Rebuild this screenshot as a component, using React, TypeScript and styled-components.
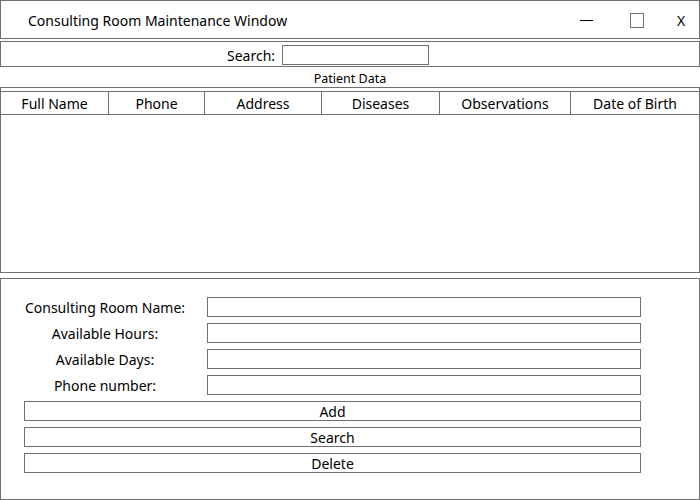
import React from "react";
import styled, { createGlobalStyle } from "styled-components";

const Global = createGlobalStyle`
  html, body { margin: 0; padding: 0; background: #ffffff; }
  * { box-sizing: border-box; }
  body { font-family: "Noto Sans", "Open Sans", sans-serif; color: #000; }
`;

const Window = styled.div`
  width: 700px;
  height: 500px;
  display: flex;
  flex-direction: column;
  background: #fff;
`;

const TitleBar = styled.div`
  height: 39px;
  border: 1px solid #707070;
  display: flex;
  align-items: center;
  padding-left: 27px;
  font-size: 14px;
`;

const Title = styled.span`
  flex: 1;
  line-height: 1;
  padding-top: 3px;
`;

const Control = styled.div<{ $w: number; $mr: number }>`
  width: ${(p) => p.$w}px;
  margin-right: ${(p) => p.$mr}px;
  height: 37px;
  display: flex;
  align-items: center;
  justify-content: center;
  font-size: 14px;
  padding-top: 2px;
`;

const MinLine = styled.div`
  width: 13px;
  height: 1px;
  background: #000;
  margin-top: -1px;
`;

const MaxBox = styled.div`
  width: 14px;
  height: 15px;
  margin-top: 0;
  border: 1px solid #707070;
`;

const SearchBar = styled.div`
  margin-top: 2px;
  height: 26px;
  border: 1px solid #707070;
  display: flex;
  align-items: center;
  padding: 2px 0 0 226px;
  gap: 7px;
  font-size: 14px;
`;

const TextBox = styled.div<{ $w?: number }>`
  height: 20px;
  width: ${(p) => (p.$w ? `${p.$w}px` : "auto")};
  border: 1px solid #707070;
  background: #fff;
`;

const SectionLabel = styled.div`
  height: 20px;
  display: flex;
  align-items: center;
  justify-content: center;
  font-size: 12.5px;
  padding-top: 3px;
`;

const TableBox = styled.div`
  height: 186px;
  border: 1px solid #707070;
  padding-top: 3px;
`;

const HeaderRow = styled.div`
  display: grid;
  grid-template-columns: 108px 96px 117px 118px 131px 1fr;
  height: 24px;
  border-top: 1px solid #707070;
  border-bottom: 1px solid #707070;
`;

const HeaderCell = styled.div<{ $last?: boolean }>`
  border-right: ${(p) => (p.$last ? "none" : "1px solid #707070")};
  display: flex;
  align-items: center;
  justify-content: center;
  font-size: 14px;
  white-space: nowrap;
`;

const FormBox = styled.div`
  margin-top: 5px;
  flex: 1;
  border: 1px solid #707070;
  padding: 18px 0 0 23px;
`;

const FormGrid = styled.div`
  display: grid;
  grid-template-columns: 162px 434px;
  column-gap: 21px;
  row-gap: 6px;
  grid-auto-rows: 20px;
`;

const FieldLabel = styled.div`
  display: flex;
  align-items: center;
  justify-content: center;
  font-size: 14px;
  white-space: nowrap;
`;

const ActionButton = styled.div`
  grid-column: 1 / span 2;
  border: 1px solid #707070;
  display: flex;
  align-items: center;
  justify-content: center;
  font-size: 14px;
  background: #fff;
`;

const columns = ["Full Name", "Phone", "Address", "Diseases", "Observations", "Date of Birth"];
const fields = ["Consulting Room Name:", "Available Hours:", "Available Days:", "Phone number:"];
const actions = ["Add", "Search", "Delete"];

export default function App() {
  return (
    <>
      <Global />
      <Window>
        <TitleBar>
          <Title>Consulting Room Maintenance Window</Title>
          <Control $w={50} $mr={1}>
            <MinLine />
          </Control>
          <Control $w={50} $mr={4}>
            <MaxBox />
          </Control>
          <Control $w={30} $mr={3}>X</Control>
        </TitleBar>
        <SearchBar>
          <span>Search:</span>
          <TextBox $w={147} />
        </SearchBar>
        <SectionLabel>Patient Data</SectionLabel>
        <TableBox>
          <HeaderRow>
            {columns.map((c, i) => (
              <HeaderCell key={c} $last={i === columns.length - 1}>
                {c}
              </HeaderCell>
            ))}
          </HeaderRow>
        </TableBox>
        <FormBox>
          <FormGrid>
            {fields.map((f) => (
              <React.Fragment key={f}>
                <FieldLabel>{f}</FieldLabel>
                <TextBox />
              </React.Fragment>
            ))}
            {actions.map((a) => (
              <ActionButton key={a}>{a}</ActionButton>
            ))}
          </FormGrid>
        </FormBox>
      </Window>
    </>
  );
}
